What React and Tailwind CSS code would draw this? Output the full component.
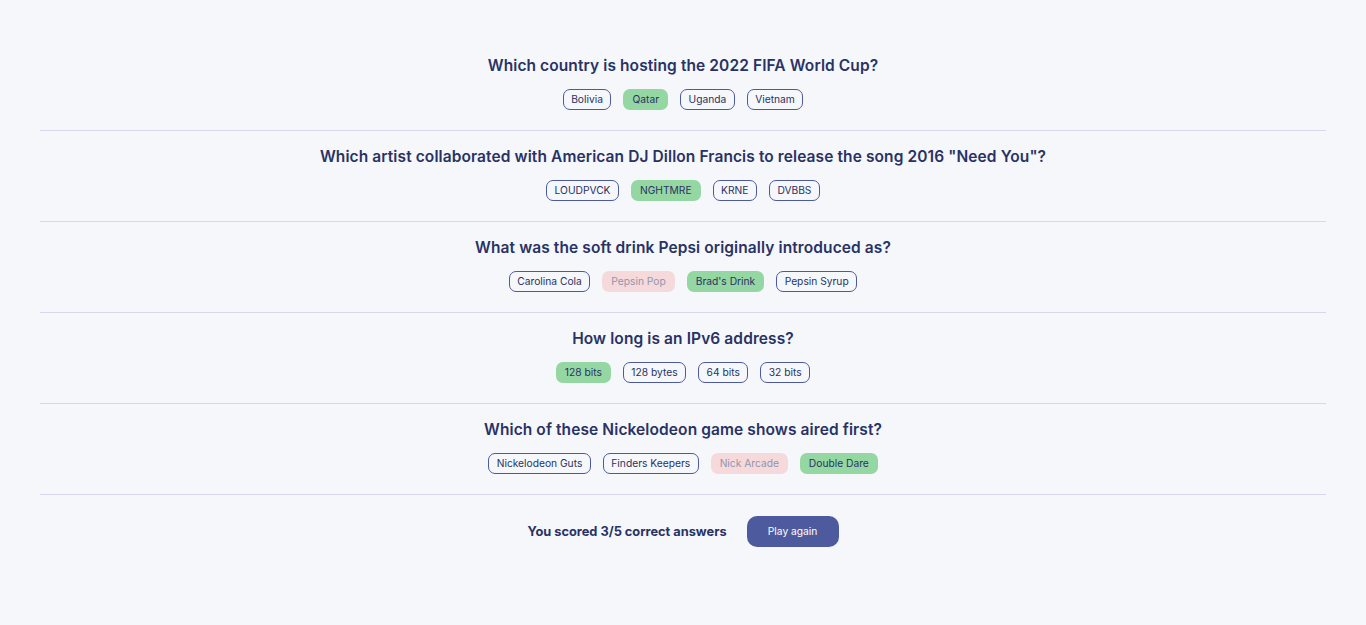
import React from 'react';

const questions = [
  {
    question: 'Which country is hosting the 2022 FIFA World Cup?',
    answers: [
      { text: 'Bolivia' },
      { text: 'Qatar', state: 'correct' },
      { text: 'Uganda' },
      { text: 'Vietnam' },
    ],
  },
  {
    question: 'Which artist collaborated with American DJ Dillon Francis to release the song 2016 "Need You"?',
    answers: [
      { text: 'LOUDPVCK' },
      { text: 'NGHTMRE', state: 'correct' },
      { text: 'KRNE' },
      { text: 'DVBBS' },
    ],
  },
  {
    question: 'What was the soft drink Pepsi originally introduced as?',
    answers: [
      { text: 'Carolina Cola' },
      { text: 'Pepsin Pop', state: 'wrong' },
      { text: "Brad's Drink", state: 'correct' },
      { text: 'Pepsin Syrup' },
    ],
  },
  {
    question: 'How long is an IPv6 address?',
    answers: [
      { text: '128 bits', state: 'correct' },
      { text: '128 bytes' },
      { text: '64 bits' },
      { text: '32 bits' },
    ],
  },
  {
    question: 'Which of these Nickelodeon game shows aired first?',
    answers: [
      { text: 'Nickelodeon Guts' },
      { text: 'Finders Keepers' },
      { text: 'Nick Arcade', state: 'wrong' },
      { text: 'Double Dare', state: 'correct' },
    ],
  },
];

function Answer({ text, state }) {
  if (state === 'correct') {
    return (
      <span className="h-[21px] px-[9px] flex items-center rounded-[7px] bg-[#94D7A2] text-[10.24px] text-[#293264]">
        {text}
      </span>
    );
  }
  if (state === 'wrong') {
    return (
      <span className="h-[21px] px-[9px] flex items-center rounded-[7px] bg-[#F8BCBC] opacity-50 text-[10.24px] text-[#293264]">
        {text}
      </span>
    );
  }
  return (
    <span className="h-[21px] px-[7.5px] flex items-center rounded-[7px] border border-[#4D5B9E] text-[10.24px] text-[#293264]">
      {text}
    </span>
  );
}

export default function App() {
  return (
    <div className="min-h-[625px] bg-[#F5F7FB] px-10 pt-[40px] font-['Inter',sans-serif] text-[#293264]">
      {questions.map((q, i) => (
        <div key={i} className="pt-4 pb-5 border-b border-[#D6D9EE] flex flex-col items-center">
          <h2 className="h-5 leading-5 text-[15.5px] font-semibold font-['Inter',sans-serif] tracking-[0.1px]">
            {q.question}
          </h2>
          <div className="mt-[13px] flex gap-3">
            {q.answers.map((a) => (
              <Answer key={a.text} text={a.text} state={a.state} />
            ))}
          </div>
        </div>
      ))}
      <div className="mt-[21px] flex items-center justify-center gap-5">
        <span className="text-[12.8px] font-bold">You scored 3/5 correct answers</span>
        <button className="w-[92px] h-[31px] rounded-[10px] bg-[#4D5B9E] text-white text-[10.24px]">
          Play again
        </button>
      </div>
    </div>
  );
}
